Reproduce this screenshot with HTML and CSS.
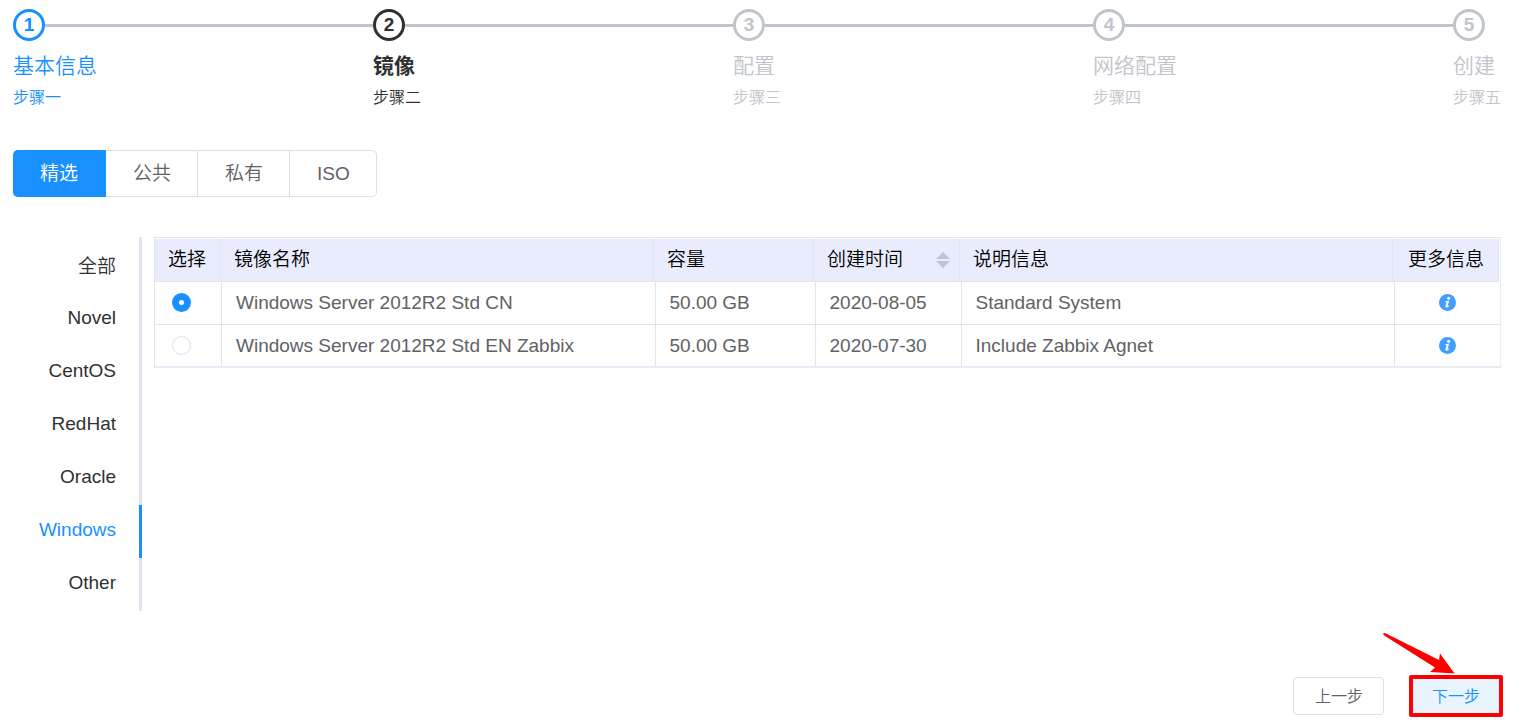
FILE: index.html
```html
<!DOCTYPE html>
<html lang="zh-CN">
<head>
<meta charset="utf-8">
<title>镜像</title>
<link rel="stylesheet" href="styles.css">
</head>
<body>
<main class="page">
  <ol class="steps">
    <li class="step step-done"><div class="step-head"><span class="step-num">1</span></div><div class="step-title">基本信息</div><div class="step-desc">步骤一</div></li>
    <li class="step step-current"><div class="step-head"><span class="step-num">2</span></div><div class="step-title">镜像</div><div class="step-desc">步骤二</div></li>
    <li class="step"><div class="step-head"><span class="step-num">3</span></div><div class="step-title">配置</div><div class="step-desc">步骤三</div></li>
    <li class="step"><div class="step-head"><span class="step-num">4</span></div><div class="step-title">网络配置</div><div class="step-desc">步骤四</div></li>
    <li class="step"><div class="step-head"><span class="step-num">5</span></div><div class="step-title">创建</div><div class="step-desc">步骤五</div></li>
  </ol>

  <div class="sources">
    <button type="button" class="source source-active">精选</button>
    <button type="button" class="source">公共</button>
    <button type="button" class="source">私有</button>
    <button type="button" class="source">ISO</button>
  </div>

  <section class="content">
    <nav class="systems">
      <a class="system" href="#all">全部</a>
      <a class="system" href="#novel">Novel</a>
      <a class="system" href="#centos">CentOS</a>
      <a class="system" href="#redhat">RedHat</a>
      <a class="system" href="#oracle">Oracle</a>
      <a class="system system-active" href="#windows">Windows</a>
      <a class="system" href="#other">Other</a>
    </nav>

    <table class="images">
      <thead>
        <tr>
          <th>选择</th>
          <th>镜像名称</th>
          <th>容量</th>
          <th class="sortable">创建时间
            <svg class="sort" width="14" height="16" viewBox="0 0 14 16" aria-hidden="true"><path d="M7 0 14 7H0zM0 9h14l-7 7z" fill="#c0c4cc"/></svg>
          </th>
          <th>说明信息</th>
          <th>更多信息</th>
        </tr>
      </thead>
      <tbody>
        <tr>
          <td class="pick"><input class="radio" type="radio" name="image" id="image-cn" checked></td>
          <td><label for="image-cn">Windows Server 2012R2 Std CN</label></td>
          <td>50.00 GB</td>
          <td>2020-08-05</td>
          <td>Standard System</td>
          <td class="more"><button type="button" class="info" aria-label="更多信息"><svg width="17" height="17" viewBox="0 0 17 17"><circle cx="8.500" cy="8.500" r="8.500" fill="#409eff"/><circle cx="9.700" cy="4.300" r="1.500" fill="#fff"/><path d="M6 7.200c1.300-.2 2.700-.6 4.100-.8L8.700 11.800c-.1.600.5.400 1.300-.5l.5.400c-1.200 2-4.500 2.700-4 .5l1-3.900c.1-.4-.4-.5-1.500-.4z" fill="#fff"/></svg></button></td>
        </tr>
        <tr>
          <td class="pick"><input class="radio" type="radio" name="image" id="image-en"></td>
          <td><label for="image-en">Windows Server 2012R2 Std EN Zabbix</label></td>
          <td>50.00 GB</td>
          <td>2020-07-30</td>
          <td>Include Zabbix Agnet</td>
          <td class="more"><button type="button" class="info" aria-label="更多信息"><svg width="17" height="17" viewBox="0 0 17 17"><circle cx="8.500" cy="8.500" r="8.500" fill="#409eff"/><circle cx="9.700" cy="4.300" r="1.500" fill="#fff"/><path d="M6 7.200c1.300-.2 2.700-.6 4.100-.8L8.700 11.800c-.1.600.5.400 1.300-.5l.5.400c-1.200 2-4.500 2.700-4 .5l1-3.900c.1-.4-.4-.5-1.500-.4z" fill="#fff"/></svg></button></td>
        </tr>
      </tbody>
    </table>
  </section>

  <footer class="actions">
    <button type="button" class="action">上一步</button>
    <div class="marked">
      <button type="button" class="action action-next">下一步</button>
      <span class="mark-box"></span>
      <svg class="mark-arrow" width="74" height="42" viewBox="0 0 74 42" aria-hidden="true"><path d="M1.500 1.200C2.200.7 3 1 4 1.500L57 28l1-6.500L72.500 41.500 48 40l5-4.500L3 4C1.500 3 .8 1.800 1.500 1.200z" fill="#f00"/></svg>
    </div>
  </footer>
</main>
</body>
</html>
```
FILE: styles.css
```css
* { box-sizing: border-box; }

body {
  margin: 0;
  background: #fff;
  color: #606266;
  font-family: "Liberation Sans", "Noto Sans CJK SC", sans-serif;
  font-size: 19px;
  font-weight: 350;
}

button { font-family: inherit; font-weight: inherit; }

.page { padding: 9px 12px 10px 13px; }

.steps {
  display: flex;
  margin: 0;
  padding: 0;
  list-style: none;
}

.step { flex: 1; color: #c0c4cc; }
.step:last-child { flex: none; }
.step-done { color: #1890ff; }
.step-current { color: #303133; }

.step-head { display: flex; align-items: center; }
.step:not(:last-child) .step-head::after {
  content: "";
  flex: 1;
  height: 3px;
  background: #c0c4cc;
}

.step-num {
  display: flex;
  align-items: center;
  justify-content: center;
  width: 32px;
  height: 32px;
  border: 3px solid;
  border-radius: 50%;
  font-size: 19px;
  font-weight: 700;
  line-height: 24px;
}

.step-title { margin-top: 5px; font-size: 21px; line-height: 40px; }
.step-current .step-title { font-weight: 700; }
.step-desc { font-size: 16px; line-height: 24px; }

.sources { display: flex; margin-top: 40px; }

.source {
  height: 47px;
  padding: 0 26px 0 27px;
  border: 1px solid #dcdfe6;
  border-left: 0;
  background: #fff;
  color: #606266;
  font-size: 19px;
  line-height: 24px;
}
.source-active {
  padding: 0 27px;
  border-color: #1890ff;
  border-radius: 5px 0 0 5px;
  background: #1890ff;
  color: #fff;
}
.source:last-child { border-radius: 0 5px 5px 0; }

.content {
  display: flex;
  align-items: flex-start;
  gap: 12px;
  margin-top: 40px;
}

.systems {
  display: grid;
  grid-auto-rows: 53px;
  flex: none;
  width: 129px;
  padding-top: 3px;
  border-right: 3px solid #dfe4ed;
}

.system {
  display: flex;
  align-items: center;
  justify-content: flex-end;
  margin-right: -3px;
  padding: 0 23px 4px 0;
  border-right: 3px solid transparent;
  color: #303133;
  text-decoration: none;
}
.system-active { border-color: #1890ff; color: #1890ff; }

.images {
  display: block;
  flex: 1;
  border: 1px solid #dfe6ec;
  border-right-color: #ebeef5;
  border-bottom: 2px solid #e6ebf5;
}
.images thead, .images tbody { display: block; }
.images tr { display: grid; grid-template-columns: 67px 1fr 160px 146px 1fr 105px; }
.images thead tr {
  grid-template-columns: 66px 1fr 160px 146px 1fr 106px;
  margin: 1px 1px 0 0;
}

.images th, .images td {
  display: flex;
  align-items: center;
  height: 43px;
  padding: 0 14px;
  border-right: 1px solid #dfe6ec;
  border-bottom: 1px solid #dfe6ec;
  font-weight: inherit;
  line-height: 24px;
  white-space: nowrap;
}
.images th { padding: 0 13px; background: #e8ecfd; color: #000; }
.images th:last-child { padding: 0 14px 0 15px; }
.images td:last-child { border-right: 0; }
.images tbody tr:last-child td { height: 42px; border-bottom: 0; }
.images .sortable { justify-content: space-between; padding-right: 9px; }
.images .pick { padding: 0 17px 2px; }
.images .more { justify-content: center; padding-bottom: 2px; }
.images tbody { margin-bottom: -1px; }

.radio {
  appearance: none;
  width: 19px;
  height: 19px;
  margin: 0;
  border: 1px solid #dcdfe6;
  border-radius: 50%;
  background: #fff;
}
.radio:checked { border: 7px solid #1890ff; }

.info {
  display: flex;
  padding: 0;
  border: 0;
  background: none;
}

.actions {
  display: flex;
  justify-content: flex-end;
  gap: 26px;
  margin-top: 66px;
}

.action {
  height: 38px;
  padding: 1px 20px 0 21px;
  border: 1px solid #dcdfe6;
  border-radius: 4px;
  background: #fff;
  color: #606266;
  font-size: 16px;
  line-height: 24px;
}
.action-next { border-color: #badeff; background: #e8f4ff; color: #1890ff; }

.marked { position: relative; }
.mark-box {
  position: absolute;
  inset: -2px -2px -2px -1px;
  border: 4px solid #f00;
  border-radius: 2px;
  pointer-events: none;
}
.mark-arrow { position: absolute; right: 45px; bottom: 41px; }
```
